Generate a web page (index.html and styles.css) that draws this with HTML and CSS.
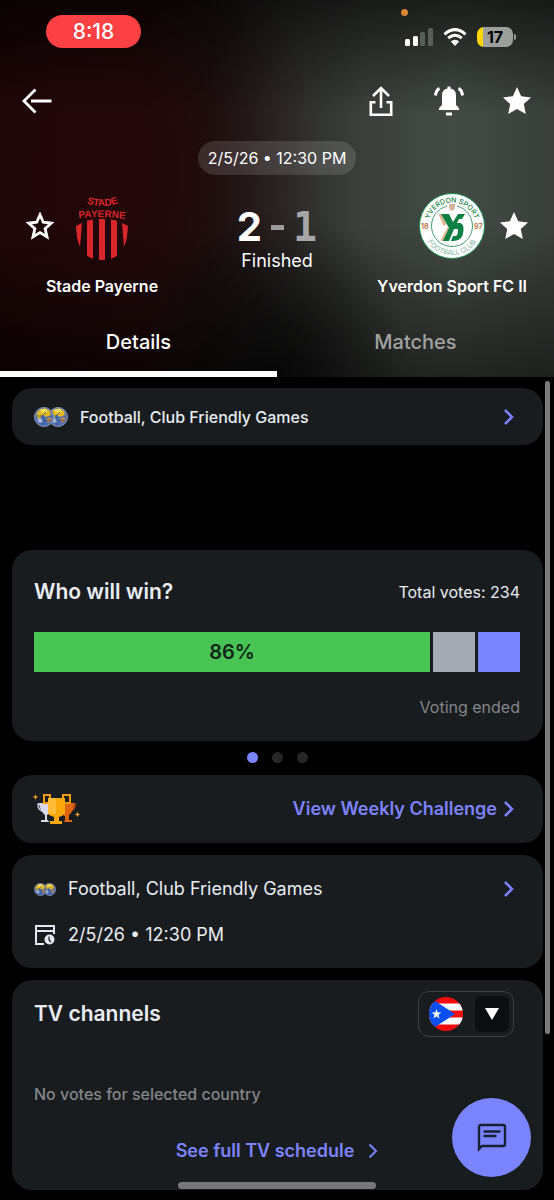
FILE: index.html
```
<!DOCTYPE html>
<html lang="en">
<head>
    <meta charset="UTF-8">
    <meta name="viewport" content="width=device-width, initial-scale=1.0">
    <title>Stade Payerne - Yverdon Sport FC II</title>
    <link rel="stylesheet" href="styles.css">
</head>
<body>
    <!-- Shared icons -->
    <svg class="defs" width="0" height="0" aria-hidden="true">
        <symbol id="star" viewBox="0 0 28 28">
            <path d="M14 0 L18.200 9.300 L28 10.400 L20.800 17.100 L22.800 27 L14 21.900 L5.200 27 L7.200 17.100 L0 10.400 L9.800 9.300 Z"/>
        </symbol>
        <symbol id="chevron" viewBox="0 0 12 18">
            <path d="M2 2 L9 9 L2 16" fill="none" stroke="currentColor" stroke-width="2.600"/>
        </symbol>
        <symbol id="ball" viewBox="0 0 20 20">
            <circle cx="10" cy="10" r="9.500" fill="#4a6db3" stroke="#8d97ad"/>
            <path d="M4 4 Q10 -1 16 4 L17 8 L12 10 L9 8 L5 12 L2 9 Z" fill="#e3b91f"/>
            <path d="M6 2.500 L12 1.500 L14 5 L8 6 Z" fill="#f6dc55"/>
            <path d="M3 12 L7 11 L9 15 L5 16 Z" fill="#a6b4ce"/>
            <path d="M12 12 L16 10 L18 13 L14 16 Z" fill="#cf8a3a"/>
            <path d="M2 9 L8 9 L10 14 L8 19 M10 14 L17 13 M8 9 L12 5" fill="none" stroke="#35538f" stroke-width="0.800"/>
        </symbol>
        <symbol id="balls" viewBox="0 0 34 20">
            <use href="#ball" x="14" y="0" width="20" height="20"/>
            <use href="#ball" x="0" y="0" width="20" height="20"/>
        </symbol>
    </svg>

    <header class="match-header">
        <div class="status-bar">
            <span class="clock">8:18</span>
            <div class="status-icons">
                <svg width="28" height="18" viewBox="0 0 28 18">
                    <rect x="0" y="11" width="5" height="7" rx="1.500" fill="#fff"/>
                    <rect x="8" y="8" width="5" height="10" rx="1.500" fill="#fff"/>
                    <rect x="15" y="4" width="5" height="14" rx="1.500" fill="#5a5e5a"/>
                    <rect x="23" y="0" width="5" height="18" rx="1.500" fill="#5a5e5a"/>
                </svg>
                <svg width="24" height="18" viewBox="0 0 24 18">
                    <path d="M1.500 6.300 Q12 -3 22.500 6.300" fill="none" stroke="#fff" stroke-width="3"/>
                    <path d="M5.200 10.200 Q12 4.200 18.800 10.200" fill="none" stroke="#fff" stroke-width="3"/>
                    <path d="M12 18 L7.800 13.600 Q12 10 16.200 13.600 Z" fill="#fff"/>
                </svg>
                <div class="battery"><span>17</span></div>
            </div>
            <i class="mic-dot"></i>
        </div>

        <nav class="toolbar">
            <button class="icon-btn back" aria-label="Back">
                <svg width="30" height="26" viewBox="0 0 30 26" fill="none" stroke="#fff" stroke-width="2.800">
                    <path d="M13.500 1.500 L2 13 L13.500 24.500 M9 13 H29.500"/>
                </svg>
            </button>
            <button class="icon-btn" aria-label="Share">
                <svg width="24" height="30" viewBox="0 0 24 30" fill="none" stroke="#fff" stroke-width="2.600">
                    <path d="M12 22 V2.500 M4 10 L12 2 L20 10 M6.500 16.300 H1.800 V28.700 H22.200 V16.300 H17.500"/>
                </svg>
            </button>
            <button class="icon-btn" aria-label="Notifications">
                <svg width="30" height="30" viewBox="0 0 30 30" fill="#fff">
                    <path d="M13.500 0.500 H16.500 V2.500 Q22 3.500 22 9 V19 L25 22 V24 H5 V22 L8 19 V9 Q8 3.500 13.500 2.500 Z M12 26.500 H18 V29.500 H12 Z"/>
                    <path d="M5.500 2.500 Q2 4 1.500 9.500 M24.500 2.500 Q28 4 28.500 9.500" fill="none" stroke="#fff" stroke-width="3"/>
                </svg>
            </button>
            <button class="icon-btn" aria-label="Favourite match">
                <svg width="28" height="28" fill="#fff"><use href="#star"/></svg>
            </button>
        </nav>

        <p class="kickoff">2/5/26 • 12:30 PM</p>

        <div class="teams">
            <div class="team home">
                <button class="star-btn" aria-label="Follow Stade Payerne">
                    <svg width="28" height="28" viewBox="-1 -1 30 30" fill="none" stroke="#fff" stroke-width="3"><path d="M14 2 L17.500 10 L26 10.900 L19.500 16.800 L21.500 25.500 L14 21 L6.500 25.500 L8.500 16.800 L2 10.900 L10.500 10 Z"/></svg>
                </button>
                <svg class="crest" viewBox="0 0 68 68">
                    <defs>
                        <path id="stade" d="M13 8 Q24 15 34 14 Q44 15 56 8"/>
                        <path id="payerne" d="M5 27 Q34 23 63 28"/>
                        <clipPath id="shield"><path d="M8 33 Q34 20 60 33 Q60 68 34 68 Q8 68 8 33 Z"/></clipPath>
                    </defs>
                    <g fill="#d9262b">
                        <text class="crest-home"><textPath href="#stade" startOffset="50%" text-anchor="middle">STADE</textPath></text>
                        <text class="crest-home"><textPath href="#payerne" startOffset="50%" text-anchor="middle">PAYERNE</textPath></text>
                        <g clip-path="url(#shield)">
                            <path d="M8 34 L14 31 L12 55 Q8 48 8 34 Z M19 27 H25 V68 H19 Z M31 27 H37 V68 H31 Z M43 27 H49 V68 H43 Z M60 34 L54 31 L56 55 Q60 48 60 34 Z"/>
                        </g>
                    </g>
                </svg>
                <h2>Stade Payerne</h2>
            </div>
            <div class="result">
                <div class="score"><b>2</b><i></i><b class="lost">1</b></div>
                <p>Finished</p>
            </div>
            <div class="team away">
                <svg class="crest" viewBox="0 0 68 68">
                    <defs>
                        <path id="arc-top" d="M10.500 34 A23.500 23.500 0 0 1 57.500 34"/>
                        <path id="arc-bottom" d="M5 34 A29 29 0 0 0 63 34"/>
                    </defs>
                    <circle cx="34" cy="34" r="32.500" fill="#fff" stroke="#15924f" stroke-width="1"/>
                    <circle cx="34" cy="34" r="20.500" fill="none" stroke="#4a9c78" stroke-width="1"/>
                    <rect x="29" y="11" width="10" height="8" fill="#fff"/>
                    <path d="M31 12 H37 V16 Q36 18.500 34 19 Q32 18.500 31 16 Z" fill="#d9b49c"/>
                    <text class="arc-text" fill="#15803f"><textPath href="#arc-top" startOffset="50%" text-anchor="middle">YVERDON SPORT</textPath></text>
                    <text class="arc-text" fill="#8fbfaa"><textPath href="#arc-bottom" startOffset="50%" text-anchor="middle">FOOTBALL CLUB</textPath></text>
                    <text class="year" x="3" y="37">18</text>
                    <text class="year" x="56" y="37">97</text>
                    <path d="M22 22 L27 33 M31 36 L24 49" fill="none" stroke="#d9b48c" stroke-width="3"/>
                    <path d="M23 22 H31 L35 30 L40 22 H47 L44 27 H41 L39 31 H42 Q46 32 45.500 38 Q45 49 36 49 L33 49 L35 44 H38 Q40 43 40 37 H36 L31 49 H25 L31 36 Z" fill="#0f8043"/>
                </svg>
                <button class="star-btn" aria-label="Follow Yverdon Sport FC II">
                    <svg width="28" height="28" fill="#fff"><use href="#star"/></svg>
                </button>
                <h2>Yverdon Sport FC II</h2>
            </div>
        </div>

        <nav class="tabs">
            <a href="#details" class="active">Details</a>
            <a href="#matches">Matches</a>
        </nav>
    </header>

    <main id="details">
        <a href="#tournament" class="card tournament">
            <svg width="34" height="20"><use href="#balls"/></svg>
            <span>Football, Club Friendly Games</span>
            <svg class="chevron" width="12" height="18"><use href="#chevron"/></svg>
        </a>

        <section class="card poll">
            <div class="poll-head">
                <h3>Who will win?</h3>
                <span>Total votes: 234</span>
            </div>
            <div class="vote-bar">
                <div class="vote vote-home">86%</div>
                <div class="vote vote-draw"></div>
                <div class="vote vote-away"></div>
            </div>
            <p class="poll-note">Voting ended</p>
        </section>

        <div class="dots">
            <i class="on"></i><i></i><i></i>
        </div>

        <a href="#challenge" class="card challenge">
            <svg width="48" height="32" viewBox="0 0 48 32">
                <path d="M2.500 1 L3.200 3.300 L5.500 4 L3.200 4.700 L2.500 7 L1.800 4.700 L-0.500 4 L1.800 3.300 Z M44.500 18.500 L45.200 20.800 L47.500 21.500 L45.200 22.200 L44.500 24.500 L43.800 22.200 L41.500 21.500 L43.800 20.800 Z" fill="#f5a623"/>
                <path d="M9 11 H5 Q5 17 9 18" fill="none" stroke="#c9c9e0" stroke-width="1.500"/>
                <path d="M38 11 H42 Q42 17 37 18" fill="none" stroke="#c94a0c" stroke-width="1.500"/>
                <path d="M6 10 H17 V20 L14 22 V27 H16 V29 H8 V27 H12 V22 Q7 18 6 10 Z" fill="#d8d8ea"/>
                <path d="M31 10 H41 Q41 18 36 22 V27 H39 V29 H31 Z" fill="#e0650f"/>
                <path d="M16 10 H11 V2 H17 V6 M31 10 H37 V2 H30 V6" fill="none" stroke="#f39a0b" stroke-width="2"/>
                <path d="M15 5 H32 V21 Q30 23 26 24 V28 H29 V31 H17 V28 H21 V24 Q17 23 15 21 Z" fill="#f9a70b"/>
                <path d="M15 5 H23 V21 H15 Z" fill="#fdbb35"/>
                <path d="M15 23 L20 24 V27 L15 28 Z M32 23 L27 24 V27 L32 28 Z" fill="#181c1f"/>
            </svg>
            <span>View Weekly Challenge</span>
            <svg class="chevron" width="12" height="18"><use href="#chevron"/></svg>
        </a>

        <section class="card info">
            <a href="#tournament" class="info-row">
                <svg width="22" height="13"><use href="#balls"/></svg>
                <span>Football, Club Friendly Games</span>
                <svg class="chevron" width="12" height="18"><use href="#chevron"/></svg>
            </a>
            <div class="info-row">
                <svg width="22" height="20" viewBox="0 0 22 20">
                    <path d="M10 19 H2 V1 H20 V9 M2 6 H20" fill="none" stroke="#e6eaf0" stroke-width="2"/>
                    <circle cx="15.500" cy="14.500" r="5" fill="#e6eaf0"/>
                    <path d="M15 11.500 V15 L17 17" fill="none" stroke="#181c1f" stroke-width="1.200"/>
                </svg>
                <span>2/5/26 • 12:30 PM</span>
            </div>
        </section>

        <section class="card tv">
            <div class="tv-head">
                <h3>TV channels</h3>
                <label class="country">
                    <svg width="34" height="34" viewBox="0 0 34 34">
                        <clipPath id="flag-clip"><circle cx="17" cy="17" r="17"/></clipPath>
                        <g clip-path="url(#flag-clip)">
                            <rect width="34" height="34" fill="#f20d0d"/>
                            <path d="M0 6.500 H34 V13.500 H0 Z M0 20.500 H34 V27.500 H0 Z" fill="#fff"/>
                            <path d="M0 0 L26 17 L0 34 Z" fill="#0a50f0"/>
                            <path d="M7.500 12 L8.700 15.600 H12.400 L9.400 17.800 L10.600 21.400 L7.500 19.200 L4.400 21.400 L5.600 17.800 L2.600 15.600 H6.300 Z" fill="#fff"/>
                        </g>
                    </svg>
                    <span class="country-arrow">
                        <svg width="14" height="12" viewBox="0 0 14 12"><path d="M0 0 H14 L7 12 Z" fill="#fff"/></svg>
                    </span>
                    <select aria-label="Country">
                        <option>Puerto Rico</option>
                    </select>
                </label>
            </div>
            <p class="tv-empty">No votes for selected country</p>
            <a href="#tv" class="tv-link">
                See full TV schedule
                <svg width="10" height="16" viewBox="0 0 10 16"><path d="M1.500 1.500 L8 8 L1.500 14.500" fill="none" stroke="currentColor" stroke-width="2"/></svg>
            </a>
        </section>
    </main>

    <button class="chat-btn" aria-label="Chat">
        <svg width="30" height="30" viewBox="0 0 30 30" fill="none" stroke="#182033">
            <path d="M2 26 V4 Q2 2 4 2 H26 Q28 2 28 4 V21 Q28 23 26 23 H5 Z" stroke-width="2.400"/>
            <path d="M6.500 8.500 H23.500 M6.500 13 H19.500" stroke-width="2.400"/>
        </svg>
    </button>
    <div class="scroll-thumb"></div>
    <div class="home-indicator"></div>
</body>
</html>
```
FILE: styles.css
```
* {
    box-sizing: border-box;
}
body {
    margin: 0;
    background-color: #000;
    color: #e9edf3;
    font-family: Inter, "Liberation Sans", sans-serif;
    font-size: 16px;
    line-height: 24px;
}
h2, h3, p {
    margin: 0;
}
a {
    color: inherit;
    text-decoration: none;
}
button {
    padding: 0;
    border: 0;
    background: none;
    cursor: pointer;
}
svg {
    display: block;
    flex: none;
}
.defs {
    position: absolute;
}

/* Header */
.match-header {
    padding-top: 15px;
    color: #fff;
    background:
        linear-gradient(to bottom, rgba(0, 0, 0, 0.6) 0, rgba(0, 0, 0, 0) 30%, rgba(0, 0, 0, 0) 60%, rgba(0, 0, 0, 0.5) 100%),
        radial-gradient(ellipse 24% 45% at 50% 100%, rgba(0, 0, 0, 0.7), rgba(0, 0, 0, 0) 100%),
        radial-gradient(ellipse 40% 70% at 18% 45%, #240709, rgba(28, 6, 8, 0) 100%),
        linear-gradient(to right, #160405 0, #1a0809 25%, #1a1413 38%, #2b2a29 50%, #3c403c 66%, #434a44 82%, #3a3f3b 100%);
}
.status-bar {
    position: relative;
    display: flex;
    justify-content: space-between;
    align-items: center;
    padding: 0 41px 0 46px;
}
.clock {
    width: 95px;
    border-radius: 17px;
    background-color: #fc4144;
    font-size: 21px;
    font-weight: 500;
    line-height: 33px;
    text-align: center;
}
.status-icons {
    display: flex;
    align-items: center;
    gap: 10px;
    padding-top: 10px;
}
.battery {
    position: relative;
    width: 36px;
    border-radius: 7px;
    background: linear-gradient(to right, #ffd60a 6px, #9c9f9c 6px);
    color: #000;
    font-size: 16px;
    font-weight: 700;
    line-height: 20px;
    text-align: center;
}
.battery::after {
    content: "";
    position: absolute;
    top: 7px;
    right: -3px;
    width: 2px;
    height: 6px;
    border-radius: 0 2px 2px 0;
    background-color: #9c9f9c;
}
.mic-dot {
    position: absolute;
    top: -6px;
    right: 146px;
    width: 7px;
    height: 7px;
    border-radius: 50%;
    background-color: #d98536;
}
.toolbar {
    display: flex;
    align-items: center;
    gap: 36px;
    margin-top: 37px;
    padding: 0 21px;
}
.icon-btn {
    display: flex;
    align-items: center;
    justify-content: center;
    width: 32px;
    height: 32px;
}
.back {
    margin-right: auto;
}
.kickoff {
    width: fit-content;
    margin: 24px auto 17px;
    padding: 0 10px;
    border-radius: 17px;
    background-color: rgba(255, 255, 255, 0.13);
    line-height: 34px;
}
.teams {
    display: grid;
    grid-template-columns: 1fr 146px 1fr;
}
.team {
    display: grid;
    grid-template-columns: 1fr 68px 1fr;
    align-items: center;
    justify-items: center;
    row-gap: 16px;
}
.team h2 {
    grid-column: 1 / -1;
    font-size: 16px;
    font-weight: 600;
    line-height: 20px;
}
.star-btn {
    display: flex;
    align-items: center;
    justify-content: center;
    width: 32px;
    height: 32px;
}
.home .star-btn {
    justify-self: end;
    margin-right: 12px;
}
.away .crest {
    grid-column: 2;
}
.away .star-btn {
    justify-self: start;
    margin-left: 12px;
}
.crest {
    width: 68px;
    height: 68px;
}
.crest-home {
    font-family: "Liberation Sans", sans-serif;
    font-size: 10px;
    font-weight: 700;
}
.arc-text {
    font-size: 7px;
    font-weight: 500;
}
.year {
    fill: #c07848;
    font-size: 7px;
    font-weight: 700;
}
.result {
    padding-top: 15px;
    text-align: center;
}
.result p {
    font-size: 18px;
    line-height: 28px;
}
.score {
    display: flex;
    align-items: center;
    justify-content: center;
    gap: 9px;
    font-size: 40px;
    line-height: 40px;
}
.score i {
    width: 13px;
    height: 5px;
    background-color: #9a9b9a;
}
.score .lost {
    color: #a6a7a6;
    font-family: "DejaVu Sans Mono", monospace;
}
.tabs {
    display: flex;
    margin-top: 17px;
}
.tabs a {
    flex: 1;
    border-bottom: 6px solid transparent;
    color: #a0a2a0;
    font-size: 20px;
    font-weight: 500;
    line-height: 58px;
    text-align: center;
}
.tabs .active {
    border-color: #fff;
    color: #fff;
}

/* Cards */
main {
    padding: 11px 11px 10px 12px;
}
.card {
    border-radius: 20px;
    background-color: #181c1f;
}
.chevron {
    margin-left: auto;
    color: #7c83fd;
}
.tournament {
    display: flex;
    align-items: center;
    gap: 12px;
    height: 57px;
    margin-bottom: 105px;
    padding: 0 28px 0 22px;
    font-weight: 500;
}
.poll {
    padding: 27px 23px 22px 22px;
}
.poll-head {
    display: flex;
    align-items: center;
    justify-content: space-between;
    line-height: 30px;
}
h3 {
    font-size: 21px;
    font-weight: 600;
    line-height: 30px;
}
.vote-bar {
    display: flex;
    gap: 3px;
    margin-top: 25px;
}
.vote {
    width: 42px;
    height: 40px;
}
.vote-home {
    flex: 1;
    background-color: #48c454;
    color: #10241a;
    font-size: 20px;
    font-weight: 600;
    line-height: 40px;
    text-align: center;
}
.vote-draw {
    background-color: #a5a9b3;
}
.vote-away {
    background-color: #7b84ff;
}
.poll-note {
    margin-top: 23px;
    color: #83868a;
    text-align: right;
}
.dots {
    display: flex;
    justify-content: center;
    gap: 14px;
    padding: 11px 0 12px;
}
.dots i {
    width: 11px;
    height: 11px;
    border-radius: 50%;
    background-color: #262626;
}
.dots .on {
    background-color: #7b84ff;
}
.challenge {
    display: flex;
    align-items: center;
    gap: 6px;
    height: 68px;
    padding: 0 28px 0 21px;
    color: #7c83fd;
    font-size: 18px;
    font-weight: 600;
}
.challenge span {
    margin-left: auto;
}
.challenge .chevron {
    margin-left: 0;
}
.info {
    display: grid;
    gap: 22px;
    margin-top: 12px;
    padding: 22px 28px 21px 22px;
    font-size: 18px;
}
.info-row {
    display: flex;
    align-items: center;
    gap: 12px;
}
.tv {
    margin-top: 12px;
    padding: 11px 23px 26px 22px;
}
.tv-head {
    display: flex;
    align-items: center;
    justify-content: space-between;
}
.country {
    position: relative;
    display: flex;
    align-items: center;
    gap: 12px;
    height: 46px;
    margin-right: 6px;
    padding: 0 4px 0 10px;
    border: 1px solid #3c4043;
    border-radius: 11px;
}
.country select {
    position: absolute;
    inset: 0;
    width: 100%;
    opacity: 0;
    cursor: pointer;
}
.country-arrow {
    display: flex;
    align-items: center;
    justify-content: center;
    width: 34px;
    height: 36px;
    border-radius: 6px;
    background-color: #0b0e10;
}
.tv-empty {
    margin-top: 45px;
    color: #83868a;
    font-weight: 500;
}
.tv-link {
    display: flex;
    align-items: center;
    justify-content: center;
    gap: 14px;
    margin-top: 32px;
    color: #7c83fd;
    font-size: 18px;
    font-weight: 600;
    line-height: 26px;
}

/* Floating parts */
.chat-btn {
    position: fixed;
    right: 23px;
    bottom: 23px;
    display: flex;
    align-items: center;
    justify-content: center;
    width: 79px;
    height: 79px;
    border-radius: 50%;
    background-color: #7b84ff;
}
.scroll-thumb {
    position: fixed;
    top: 381px;
    right: 4px;
    width: 5px;
    height: 653px;
    border-radius: 3px;
    background-color: #7c7c7c;
}
.home-indicator {
    position: fixed;
    bottom: 11px;
    left: 50%;
    width: 198px;
    height: 7px;
    margin-left: -99px;
    border-radius: 4px;
    background-color: #77787a;
}
```
